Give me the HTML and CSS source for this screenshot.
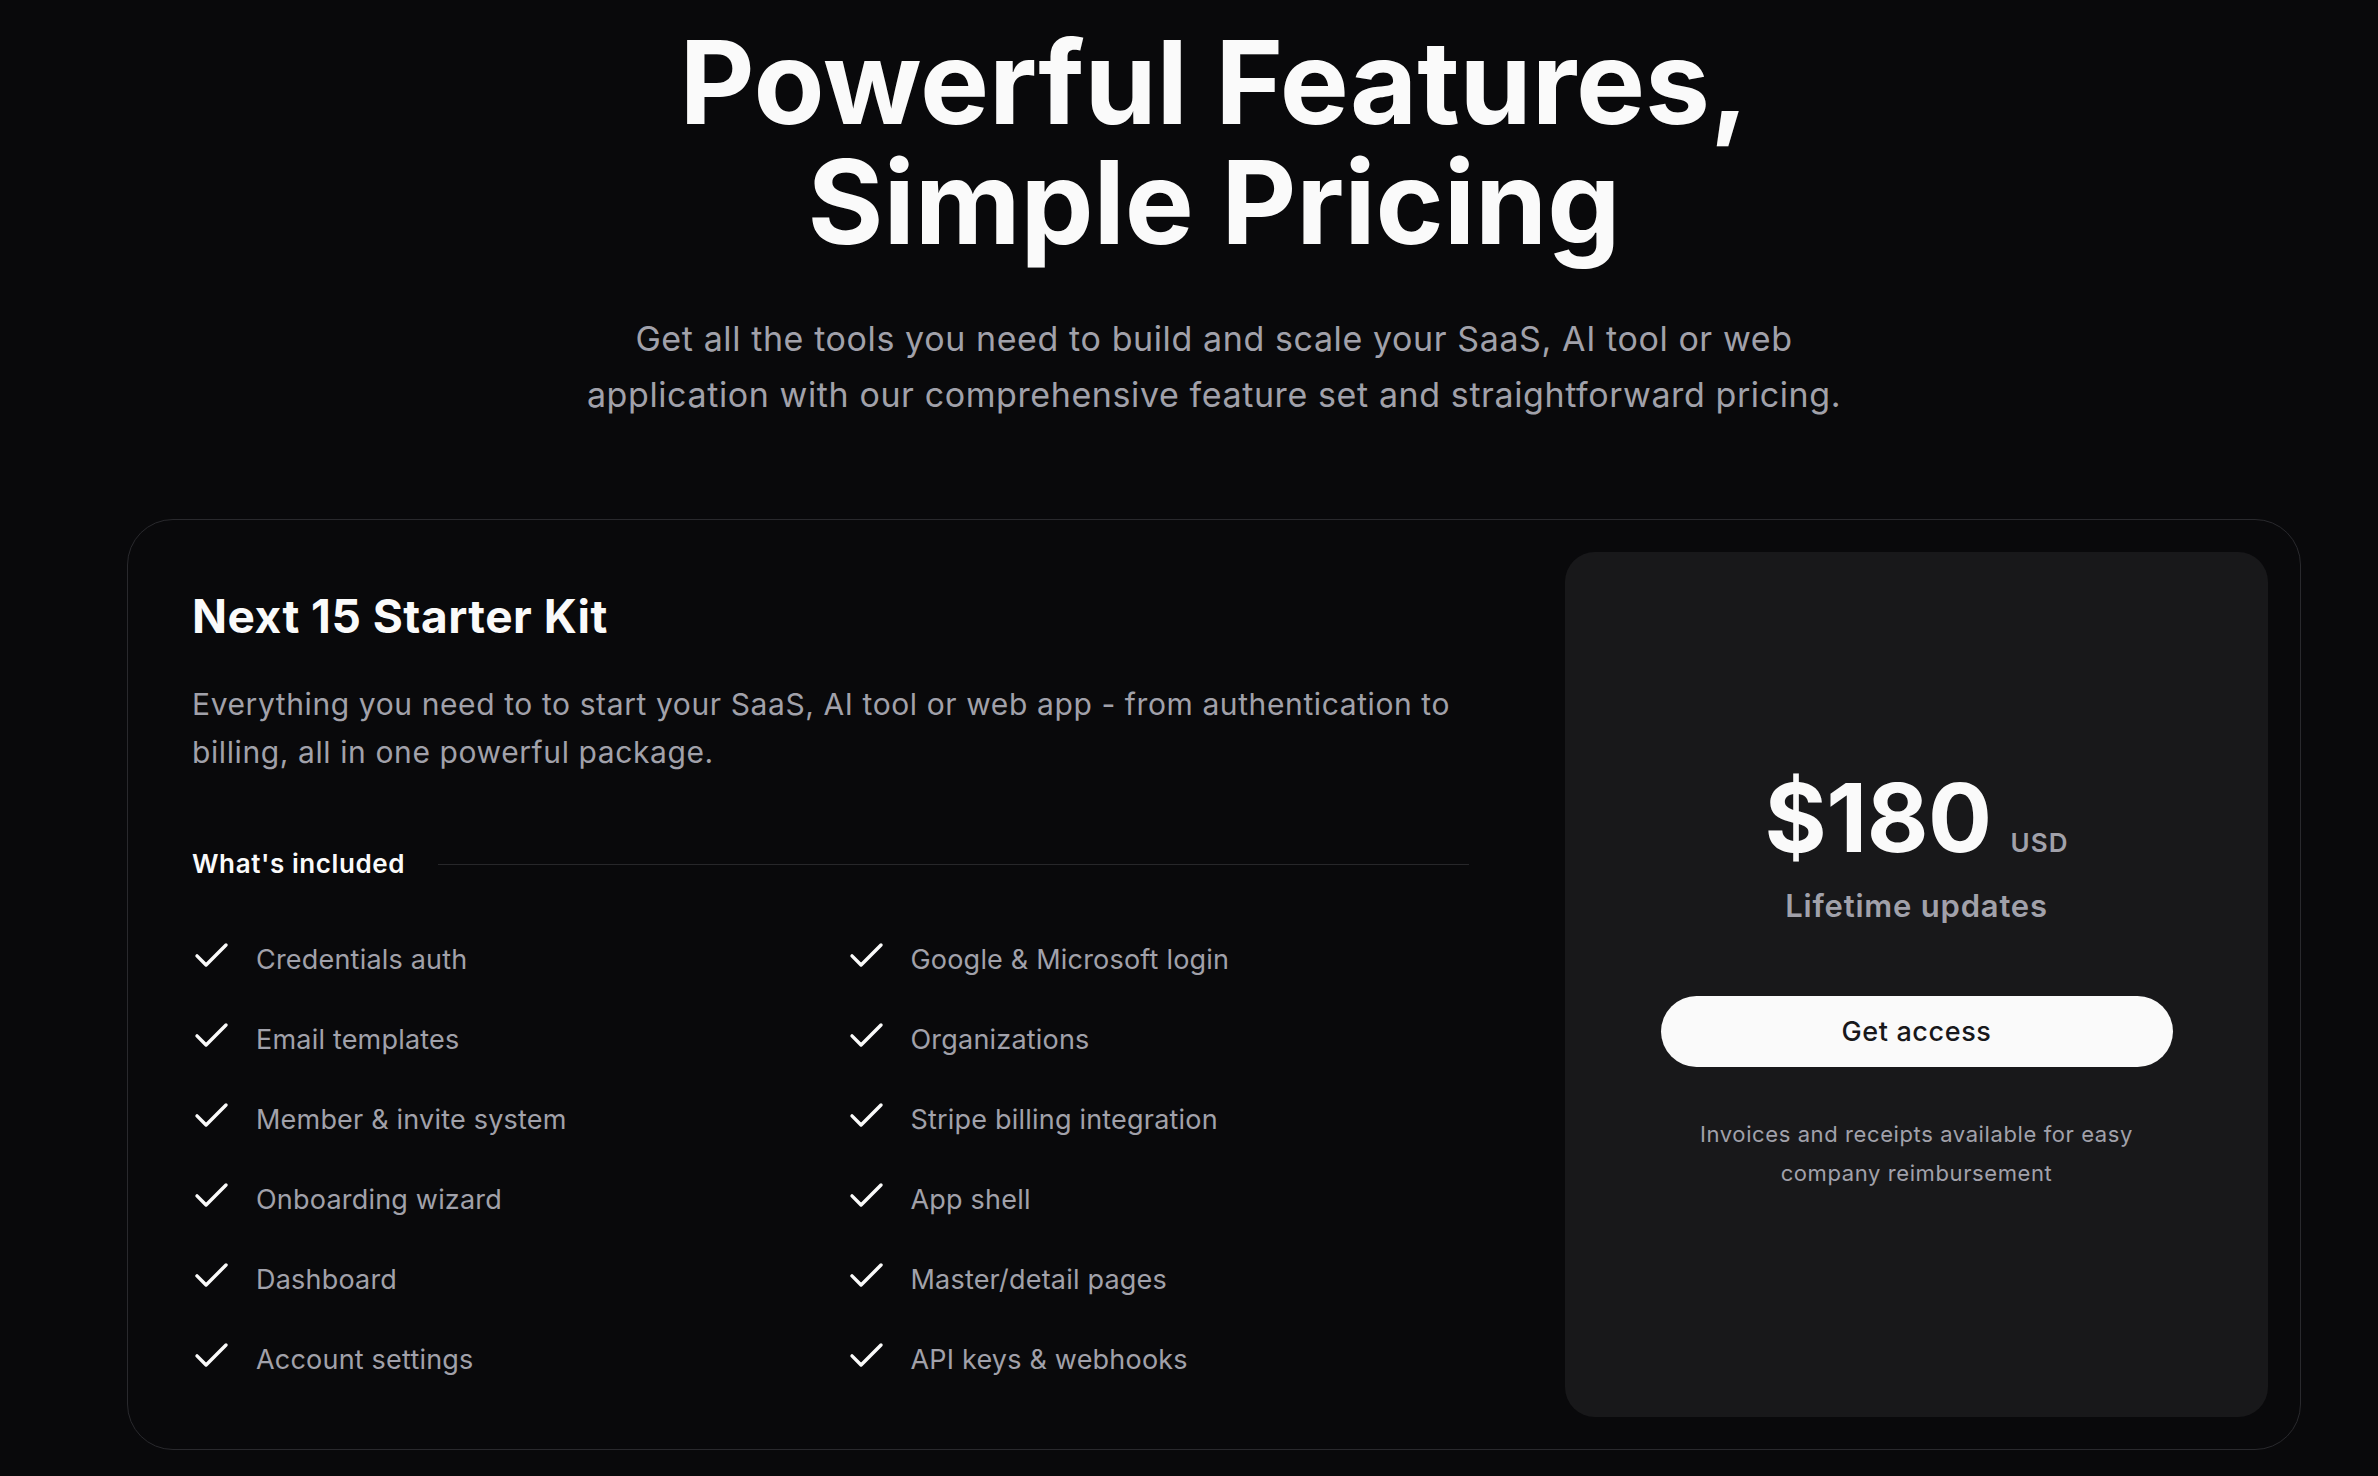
FILE: index.html
```html
<!DOCTYPE html>
<html lang="en">
<head>
<meta charset="utf-8">
<title>Pricing</title>
<link rel="stylesheet" href="styles.css">
</head>
<body>
<main class="page">
  <header class="hero">
    <h1 class="hero-title"><span class="hero-line">Powerful Features,</span><span class="hero-line">Simple Pricing</span></h1>
    <p class="hero-sub">Get all the tools you need to build and scale your SaaS, AI tool or web<br>application with our comprehensive feature set and straightforward pricing.</p>
  </header>

  <section class="plan">
    <div class="plan-info">
      <h2 class="plan-title">Next 15 Starter Kit</h2>
      <p class="plan-desc">Everything you need to to start your SaaS, AI tool or web app - from authentication to billing, all in one powerful package.</p>
      <div class="included">
        <span class="included-label">What's included</span>
        <span class="included-line"></span>
      </div>
      <ul class="features">
        <li class="feature"><svg class="check" viewBox="4 6 16 11"><polyline points="20 6 9 17 4 12"/></svg><span>Credentials auth</span></li>
        <li class="feature"><svg class="check" viewBox="4 6 16 11"><polyline points="20 6 9 17 4 12"/></svg><span>Google &amp; Microsoft login</span></li>
        <li class="feature"><svg class="check" viewBox="4 6 16 11"><polyline points="20 6 9 17 4 12"/></svg><span>Email templates</span></li>
        <li class="feature"><svg class="check" viewBox="4 6 16 11"><polyline points="20 6 9 17 4 12"/></svg><span>Organizations</span></li>
        <li class="feature"><svg class="check" viewBox="4 6 16 11"><polyline points="20 6 9 17 4 12"/></svg><span>Member &amp; invite system</span></li>
        <li class="feature"><svg class="check" viewBox="4 6 16 11"><polyline points="20 6 9 17 4 12"/></svg><span>Stripe billing integration</span></li>
        <li class="feature"><svg class="check" viewBox="4 6 16 11"><polyline points="20 6 9 17 4 12"/></svg><span>Onboarding wizard</span></li>
        <li class="feature"><svg class="check" viewBox="4 6 16 11"><polyline points="20 6 9 17 4 12"/></svg><span>App shell</span></li>
        <li class="feature"><svg class="check" viewBox="4 6 16 11"><polyline points="20 6 9 17 4 12"/></svg><span>Dashboard</span></li>
        <li class="feature"><svg class="check" viewBox="4 6 16 11"><polyline points="20 6 9 17 4 12"/></svg><span>Master/detail pages</span></li>
        <li class="feature"><svg class="check" viewBox="4 6 16 11"><polyline points="20 6 9 17 4 12"/></svg><span>Account settings</span></li>
        <li class="feature"><svg class="check" viewBox="4 6 16 11"><polyline points="20 6 9 17 4 12"/></svg><span>API keys &amp; webhooks</span></li>
      </ul>
    </div>

    <aside class="price-card">
      <div class="price-row">
        <span class="price">$180</span>
        <span class="currency">USD</span>
      </div>
      <p class="lifetime">Lifetime updates</p>
      <a class="cta" href="#">Get access</a>
      <p class="note">Invoices and receipts available for easy company reimbursement</p>
    </aside>
  </section>
</main>
</body>
</html>
```

FILE: styles.css
```css
* {
  box-sizing: border-box;
}

html, body {
  margin: 0;
  padding: 0;
  background: #09090b;
}

body {
  font-family: Inter, "Liberation Sans", sans-serif;
  color: #fafafa;
  min-height: 1476px;
}

.page {
  width: 2174px;
  margin-left: 127px;
  padding-top: 22px;
}

.hero {
  display: flex;
  flex-direction: column;
  align-items: center;
  text-align: center;
}

.hero-title {
  margin: 0;
  font-size: 116px;
  line-height: 120px;
  font-weight: 700;
  letter-spacing: -0.1px;
  color: #fafafa;
}

.hero-line {
  display: block;
}

.hero-sub {
  margin: 49px 0 0;
  font-size: 34px;
  line-height: 56px;
  color: #a1a1aa;
  font-weight: 400;
  letter-spacing: 0.6px;
}

.plan {
  margin-top: 96px;
  border: 1px solid #29292d;
  border-radius: 46px;
  padding: 32px;
  display: grid;
  grid-template-columns: 1fr 703px;
  gap: 64px;
}

.plan-info {
  padding: 32px 32px 37px;
}

.plan-title {
  margin: 0;
  font-size: 46px;
  line-height: 64px;
  font-weight: 700;
  letter-spacing: 0.5px;
  color: #fafafa;
}

.plan-desc {
  margin: 32px 0 0;
  font-size: 30px;
  line-height: 48px;
  color: #a1a1aa;
  letter-spacing: 0.6px;
}

.included {
  margin-top: 70px;
  display: flex;
  align-items: center;
  gap: 33px;
}

.included-label {
  font-size: 26px;
  line-height: 36px;
  font-weight: 600;
  color: #fafafa;
  letter-spacing: 0.6px;
  white-space: nowrap;
}

.included-line {
  flex: 1;
  height: 1px;
  background: #27272a;
}

.features {
  list-style: none;
  margin: 58px 0 0;
  padding: 0;
  display: grid;
  grid-template-columns: 1fr 1fr;
  column-gap: 32px;
  row-gap: 40px;
}

.feature {
  display: flex;
  align-items: flex-start;
  font-size: 27px;
  line-height: 40px;
  color: #a1a1aa;
  letter-spacing: 0.2px;
}

.check {
  width: 29px;
  height: 20px;
  margin: 5px 30px 0 5px;
  flex: none;
  overflow: visible;
  fill: none;
  stroke: #fafafa;
  stroke-width: 1.9;
  stroke-linecap: round;
  stroke-linejoin: round;
}

.price-card {
  background: #18181a;
  border-radius: 30px;
  padding-bottom: 9px;
  display: flex;
  flex-direction: column;
  align-items: center;
  justify-content: center;
  text-align: center;
}

.price-row {
  display: flex;
  align-items: baseline;
  gap: 19px;
}

.price {
  font-size: 95px;
  line-height: 100px;
  font-weight: 700;
  letter-spacing: -0.5px;
  color: #fafafa;
}

.currency {
  font-size: 26px;
  font-weight: 600;
  color: #a1a1aa;
  letter-spacing: 1px;
}

.lifetime {
  margin: 18px 0 0;
  font-size: 31px;
  line-height: 40px;
  font-weight: 600;
  color: #a1a1aa;
  letter-spacing: 0.8px;
}

.cta {
  margin-top: 70px;
  width: 512px;
  height: 71px;
  border-radius: 36px;
  background: #fafafa;
  color: #18181b;
  text-decoration: none;
  display: flex;
  align-items: center;
  justify-content: center;
  font-size: 27px;
  font-weight: 500;
  letter-spacing: 0.6px;
}

.note {
  margin: 48px 0 0;
  max-width: 470px;
  font-size: 22px;
  line-height: 39px;
  color: #a1a1aa;
  letter-spacing: 0.6px;
}
```
